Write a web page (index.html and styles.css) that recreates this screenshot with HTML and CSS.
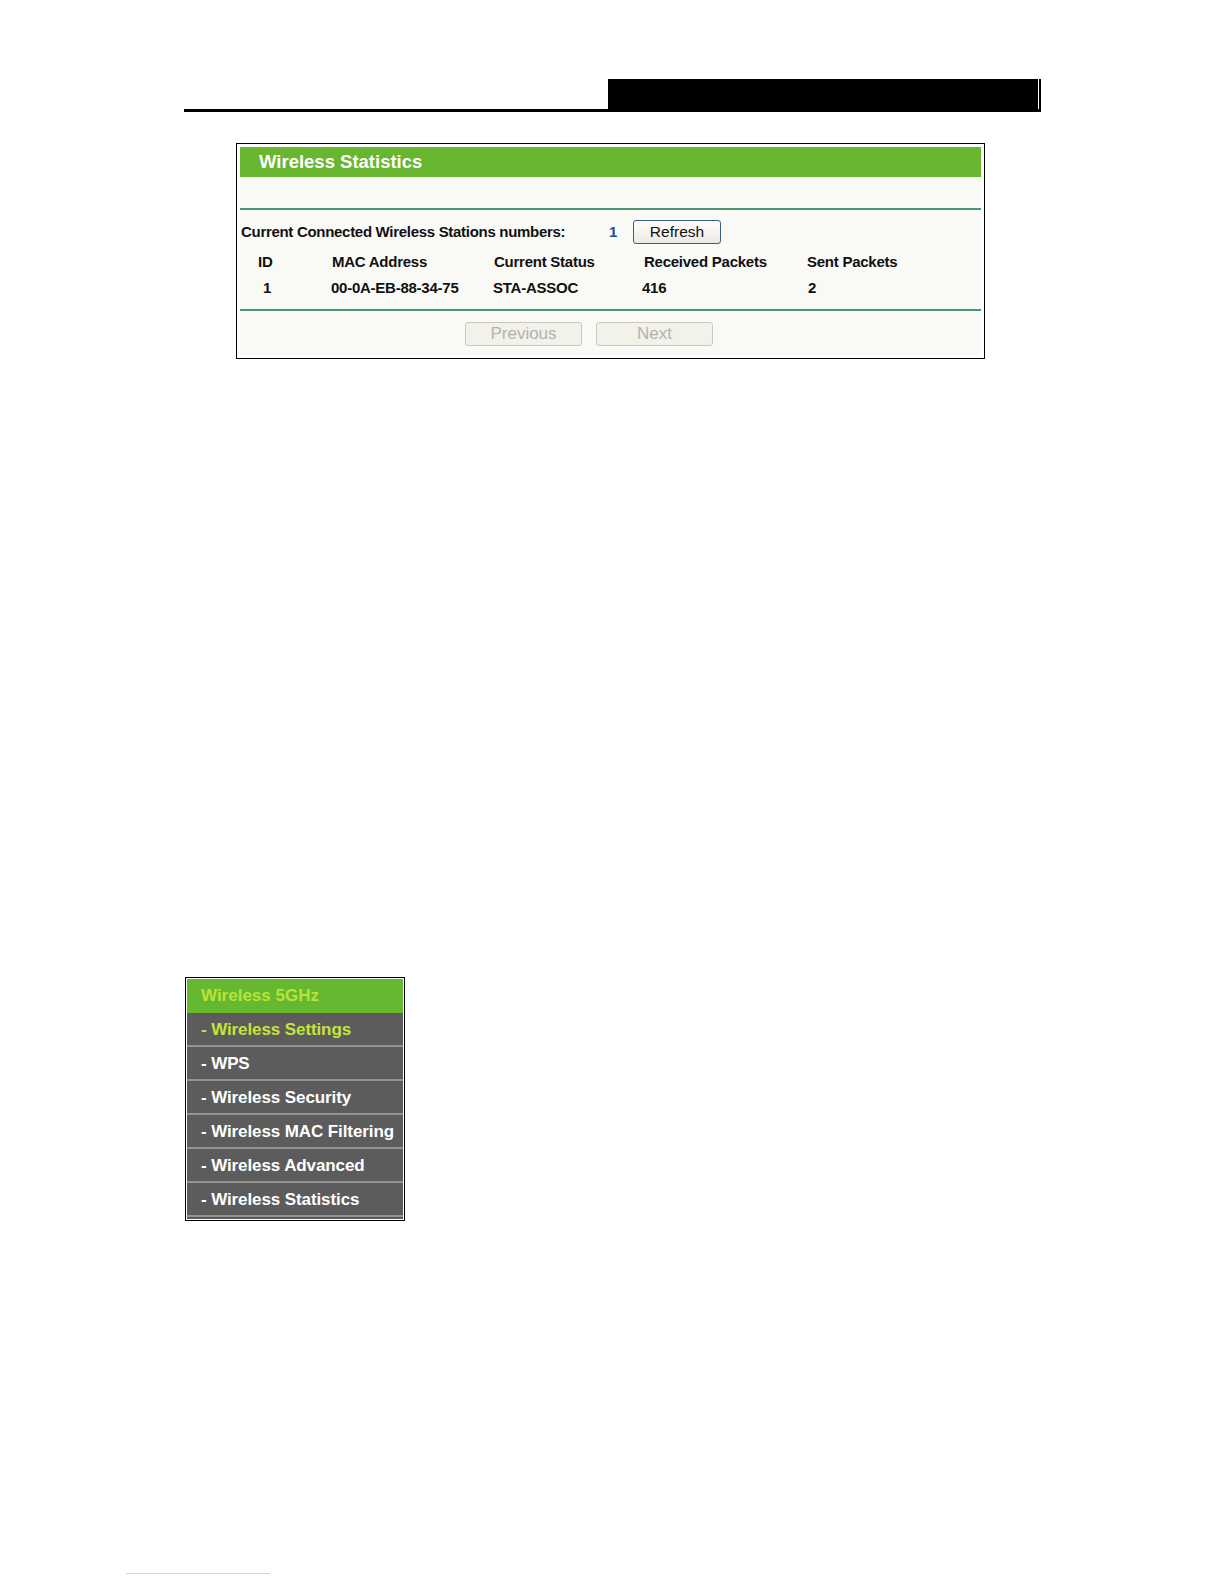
FILE: index.html
```html
<!DOCTYPE html>
<html>
<head>
<meta charset="utf-8">
<link rel="stylesheet" href="styles.css">
</head>
<body>
<div class="page">
  <div class="doc-header">
    <div class="doc-rule"></div>
    <div class="doc-tab"></div>
    <div class="doc-gap"></div>
    <div class="doc-edge"></div>
  </div>

  <div class="panel">
    <div class="panel-inner">
      <div class="panel-title">Wireless Statistics</div>
      <div class="panel-blank"></div>
      <div class="panel-line"></div>
      <div class="station-row">
        <span class="station-label">Current Connected Wireless Stations numbers:</span>
        <span class="station-count">1</span>
        <button class="btn-refresh">Refresh</button>
      </div>
      <div class="stats-row stats-head">
        <span class="c-id">ID</span>
        <span class="c-mac">MAC Address</span>
        <span class="c-status">Current Status</span>
        <span class="c-recv">Received Packets</span>
        <span class="c-sent">Sent Packets</span>
      </div>
      <div class="stats-row stats-data">
        <span class="d-id">1</span>
        <span class="d-mac">00-0A-EB-88-34-75</span>
        <span class="d-status">STA-ASSOC</span>
        <span class="d-recv">416</span>
        <span class="d-sent">2</span>
      </div>
      <div class="panel-line line-bottom"></div>
      <div class="pager">
        <button class="btn-page" disabled>Previous</button>
        <button class="btn-page" disabled>Next</button>
      </div>
    </div>
  </div>

  <div class="menu">
    <div class="menu-inner">
      <div class="menu-head">Wireless 5GHz</div>
      <div class="menu-item active">- Wireless Settings</div>
      <div class="menu-item">- WPS</div>
      <div class="menu-item">- Wireless Security</div>
      <div class="menu-item">- Wireless MAC Filtering</div>
      <div class="menu-item">- Wireless Advanced</div>
      <div class="menu-item">- Wireless Statistics</div>
    </div>
  </div>

  <div class="foot-link"></div>
</div>
</body>
</html>
```

FILE: styles.css
```css
html, body {
  margin: 0;
  padding: 0;
  background: #ffffff;
}

.page {
  width: 1224px;
  height: 1584px;
  padding-top: 79px;
  box-sizing: border-box;
  font-family: "Liberation Sans", Arial, sans-serif;
  overflow: hidden;
}

/* document header */
.doc-header {
  display: flex;
  margin-left: 184px;
  width: 857px;
  height: 33px;
}
.doc-rule {
  flex: 1;
  border-bottom: 3px solid #000;
}
.doc-tab {
  width: 430px;
  background: #000;
}
.doc-gap {
  width: 1px;
  background: #fff;
  border-bottom: 3px solid #000;
  box-sizing: border-box;
}
.doc-edge {
  width: 2px;
  background: #000;
}

/* statistics panel */
.panel {
  margin-top: 31px;
  margin-left: 236px;
  width: 749px;
  height: 216px;
  border: 1px solid #000;
  box-sizing: border-box;
  padding: 3px;
  background: #fff;
}
.panel-inner {
  background: #f9f9f6;
  height: 100%;
  display: flex;
  flex-direction: column;
}
.panel-title {
  height: 30px;
  background: #68b52f;
  color: #fff;
  font-weight: bold;
  font-size: 18.5px;
  line-height: 29px;
  padding-left: 19px;
}
.panel-blank {
  height: 31px;
}
.panel-line {
  height: 2px;
  background: #4e9672;
}
.station-row {
  display: flex;
  align-items: center;
  height: 25px;
  margin-top: 9px;
  font-size: 15px;
  font-weight: bold;
  color: #111;
  padding-left: 1px;
}
.station-label {
  width: 368px;
  letter-spacing: -0.3px;
}
.station-count {
  color: #1d4f9c;
  width: 24px;
}
.btn-refresh {
  width: 88px;
  height: 24px;
  border: 1px solid #3b5d87;
  border-radius: 3px;
  background: linear-gradient(#ffffff, #ece9e0);
  font-family: "Liberation Sans", Arial, sans-serif;
  font-size: 15.5px;
  color: #111;
  padding: 0;
}
.stats-row {
  display: flex;
  font-size: 15px;
  font-weight: bold;
  color: #111;
  height: 26px;
  align-items: center;
  letter-spacing: -0.25px;
}
.stats-head {
  margin-top: 4px;
}
.c-id { padding-left: 18px; box-sizing: border-box; flex: none; width: 92px; }
.c-mac { width: 162px; flex: none; }
.c-status { width: 150px; flex: none; }
.c-recv { width: 163px; flex: none; }
.d-id { padding-left: 23px; width: 91px; box-sizing: border-box; flex: none; }
.d-mac { width: 162px; flex: none; }
.d-status { width: 149px; flex: none; }
.d-recv { width: 166px; flex: none; }
.line-bottom {
  margin-top: 9px;
}
.pager {
  display: flex;
  gap: 14px;
  margin-top: 11px;
  padding-left: 225px;
}
.btn-page {
  width: 117px;
  height: 24px;
  border: 1px solid #c9c9c2;
  border-radius: 3px;
  background: #f2f1ea;
  color: #b3b3ad;
  font-family: "Liberation Sans", Arial, sans-serif;
  font-size: 17px;
  padding: 0;
}

/* side menu */
.menu {
  margin-top: 618px;
  margin-left: 185px;
  width: 220px;
  height: 244px;
  border: 1px solid #000;
  box-sizing: border-box;
  padding: 1px;
  background: #fff;
}
.menu-inner {
  height: 100%;
  background: #5a5a5a;
  display: flex;
  flex-direction: column;
}
.menu-head {
  height: 34px;
  flex: none;
  background: #67b831;
  color: #b9e23a;
  font-size: 17px;
  font-weight: bold;
  line-height: 34px;
  padding-left: 14px;
}
.menu-item {
  height: 34px;
  flex: none;
  box-sizing: border-box;
  border-bottom: 2px solid #929292;
  color: #fff;
  font-size: 17px;
  font-weight: bold;
  line-height: 33px;
  padding-left: 14px;
  letter-spacing: -0.1px;
  background: #5c5c5c;
}
.menu-item.active {
  color: #c5e43a;
}

/* footer link line */
.foot-link {
  margin-top: 352px;
  margin-left: 126px;
  width: 144px;
  height: 1px;
  background: #cfcff5;
}
```
